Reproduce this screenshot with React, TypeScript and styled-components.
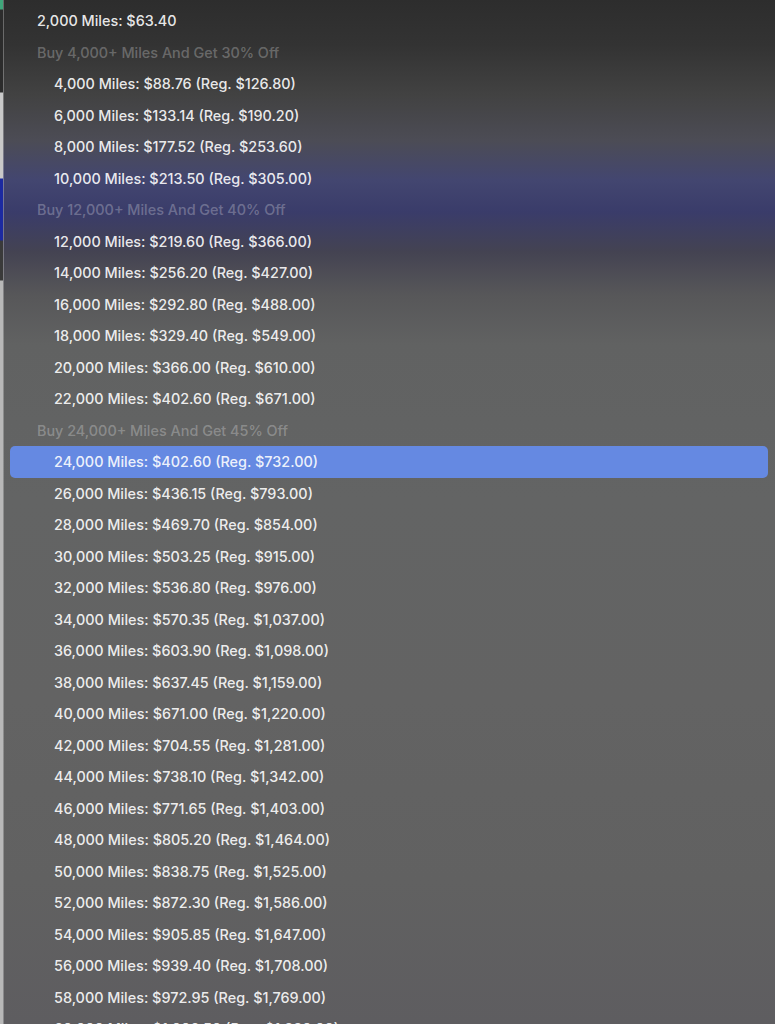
import styled, { createGlobalStyle } from "styled-components";

const GlobalStyle = createGlobalStyle`
  html, body {
    margin: 0;
    padding: 0;
    background: #5f5f60;
  }
  body {
    font-family: Inter, "Noto Sans", sans-serif;
    -webkit-font-smoothing: antialiased;
  }
`;

type Row =
  | { kind: "header"; label: string }
  | { kind: "item"; label: string; indent: boolean; selected?: boolean };

const miles = (n: number) => n.toLocaleString("en-US");
const money = (n: number) =>
  "$" + n.toLocaleString("en-US", { minimumFractionDigits: 2, maximumFractionDigits: 2 });

const item = (m: number, price: number, reg: number, selected = false): Row => ({
  kind: "item",
  indent: true,
  selected,
  label: `${miles(m)} Miles: ${money(price)} (Reg. ${money(reg)})`,
});

const rows: Row[] = [
  { kind: "item", indent: false, label: "2,000 Miles: $63.40" },
  { kind: "header", label: "Buy 4,000+ Miles And Get 30% Off" },
  item(4000, 88.76, 126.8),
  item(6000, 133.14, 190.2),
  item(8000, 177.52, 253.6),
  item(10000, 213.5, 305),
  { kind: "header", label: "Buy 12,000+ Miles And Get 40% Off" },
  item(12000, 219.6, 366),
  item(14000, 256.2, 427),
  item(16000, 292.8, 488),
  item(18000, 329.4, 549),
  item(20000, 366, 610),
  item(22000, 402.6, 671),
  { kind: "header", label: "Buy 24,000+ Miles And Get 45% Off" },
  item(24000, 402.6, 732, true),
  item(26000, 436.15, 793),
  item(28000, 469.7, 854),
  item(30000, 503.25, 915),
  item(32000, 536.8, 976),
  item(34000, 570.35, 1037),
  item(36000, 603.9, 1098),
  item(38000, 637.45, 1159),
  item(40000, 671, 1220),
  item(42000, 704.55, 1281),
  item(44000, 738.1, 1342),
  item(46000, 771.65, 1403),
  item(48000, 805.2, 1464),
  item(50000, 838.75, 1525),
  item(52000, 872.3, 1586),
  item(54000, 905.85, 1647),
  item(56000, 939.4, 1708),
  item(58000, 972.95, 1769),
  item(60000, 1006.5, 1830),
];

const Screen = styled.div`
  display: flex;
  width: 775px;
  height: 1024px;
  overflow: hidden;
`;

const Behind = styled.div`
  width: 3px;
  flex: none;
  background: linear-gradient(
    to bottom,
    #3fa57a 0px,
    #3fa57a 9px,
    #2c2c2c 10px,
    #2c2c2c 92px,
    #c9c9c9 93px,
    #c9c9c9 178px,
    #1c2aa0 179px,
    #1c2aa0 240px,
    #3a3a3a 241px,
    #3a3a3a 280px,
    #b8b8b8 281px,
    #b8b8b8 100%
  );
`;

const Menu = styled.div`
  flex: 1;
  display: flex;
  flex-direction: column;
  padding: 5px 7px 0 6px;
  border-left: 1px solid rgba(255, 255, 255, 0.28);
  background: linear-gradient(
    to bottom,
    #2d2d2d 0px,
    #333333 45px,
    #424242 95px,
    #4c4c55 140px,
    #434670 180px,
    #3a3c6a 212px,
    #444352 252px,
    #575759 295px,
    #616262 345px,
    #636464 500px,
    #636363 700px,
    #616161 880px,
    #5e5d60 1024px
  );
`;

const Option = styled.div<{ $indent: boolean; $selected?: boolean }>`
  height: 31.5px;
  flex: none;
  display: flex;
  align-items: center;
  padding-left: ${(p) => (p.$indent ? "44px" : "27px")};
  border-radius: 5px;
  font-size: 14.4px;
  font-weight: 500;
  color: rgba(255, 255, 255, 0.9);
  background: ${(p) => (p.$selected ? "#6589e2" : "transparent")};
  white-space: nowrap;
`;

const GroupLabel = styled.div`
  height: 31.5px;
  flex: none;
  display: flex;
  align-items: center;
  padding-left: 27px;
  font-size: 14.4px;
  font-weight: 500;
  color: rgba(255, 255, 255, 0.27);
  white-space: nowrap;
`;

export default function App() {
  return (
    <>
      <GlobalStyle />
      <Screen>
        <Behind />
        <Menu>
          {rows.map((r, i) =>
            r.kind === "header" ? (
              <GroupLabel key={i}>{r.label}</GroupLabel>
            ) : (
              <Option key={i} $indent={r.indent} $selected={r.selected}>
                {r.label}
              </Option>
            )
          )}
        </Menu>
      </Screen>
    </>
  );
}
